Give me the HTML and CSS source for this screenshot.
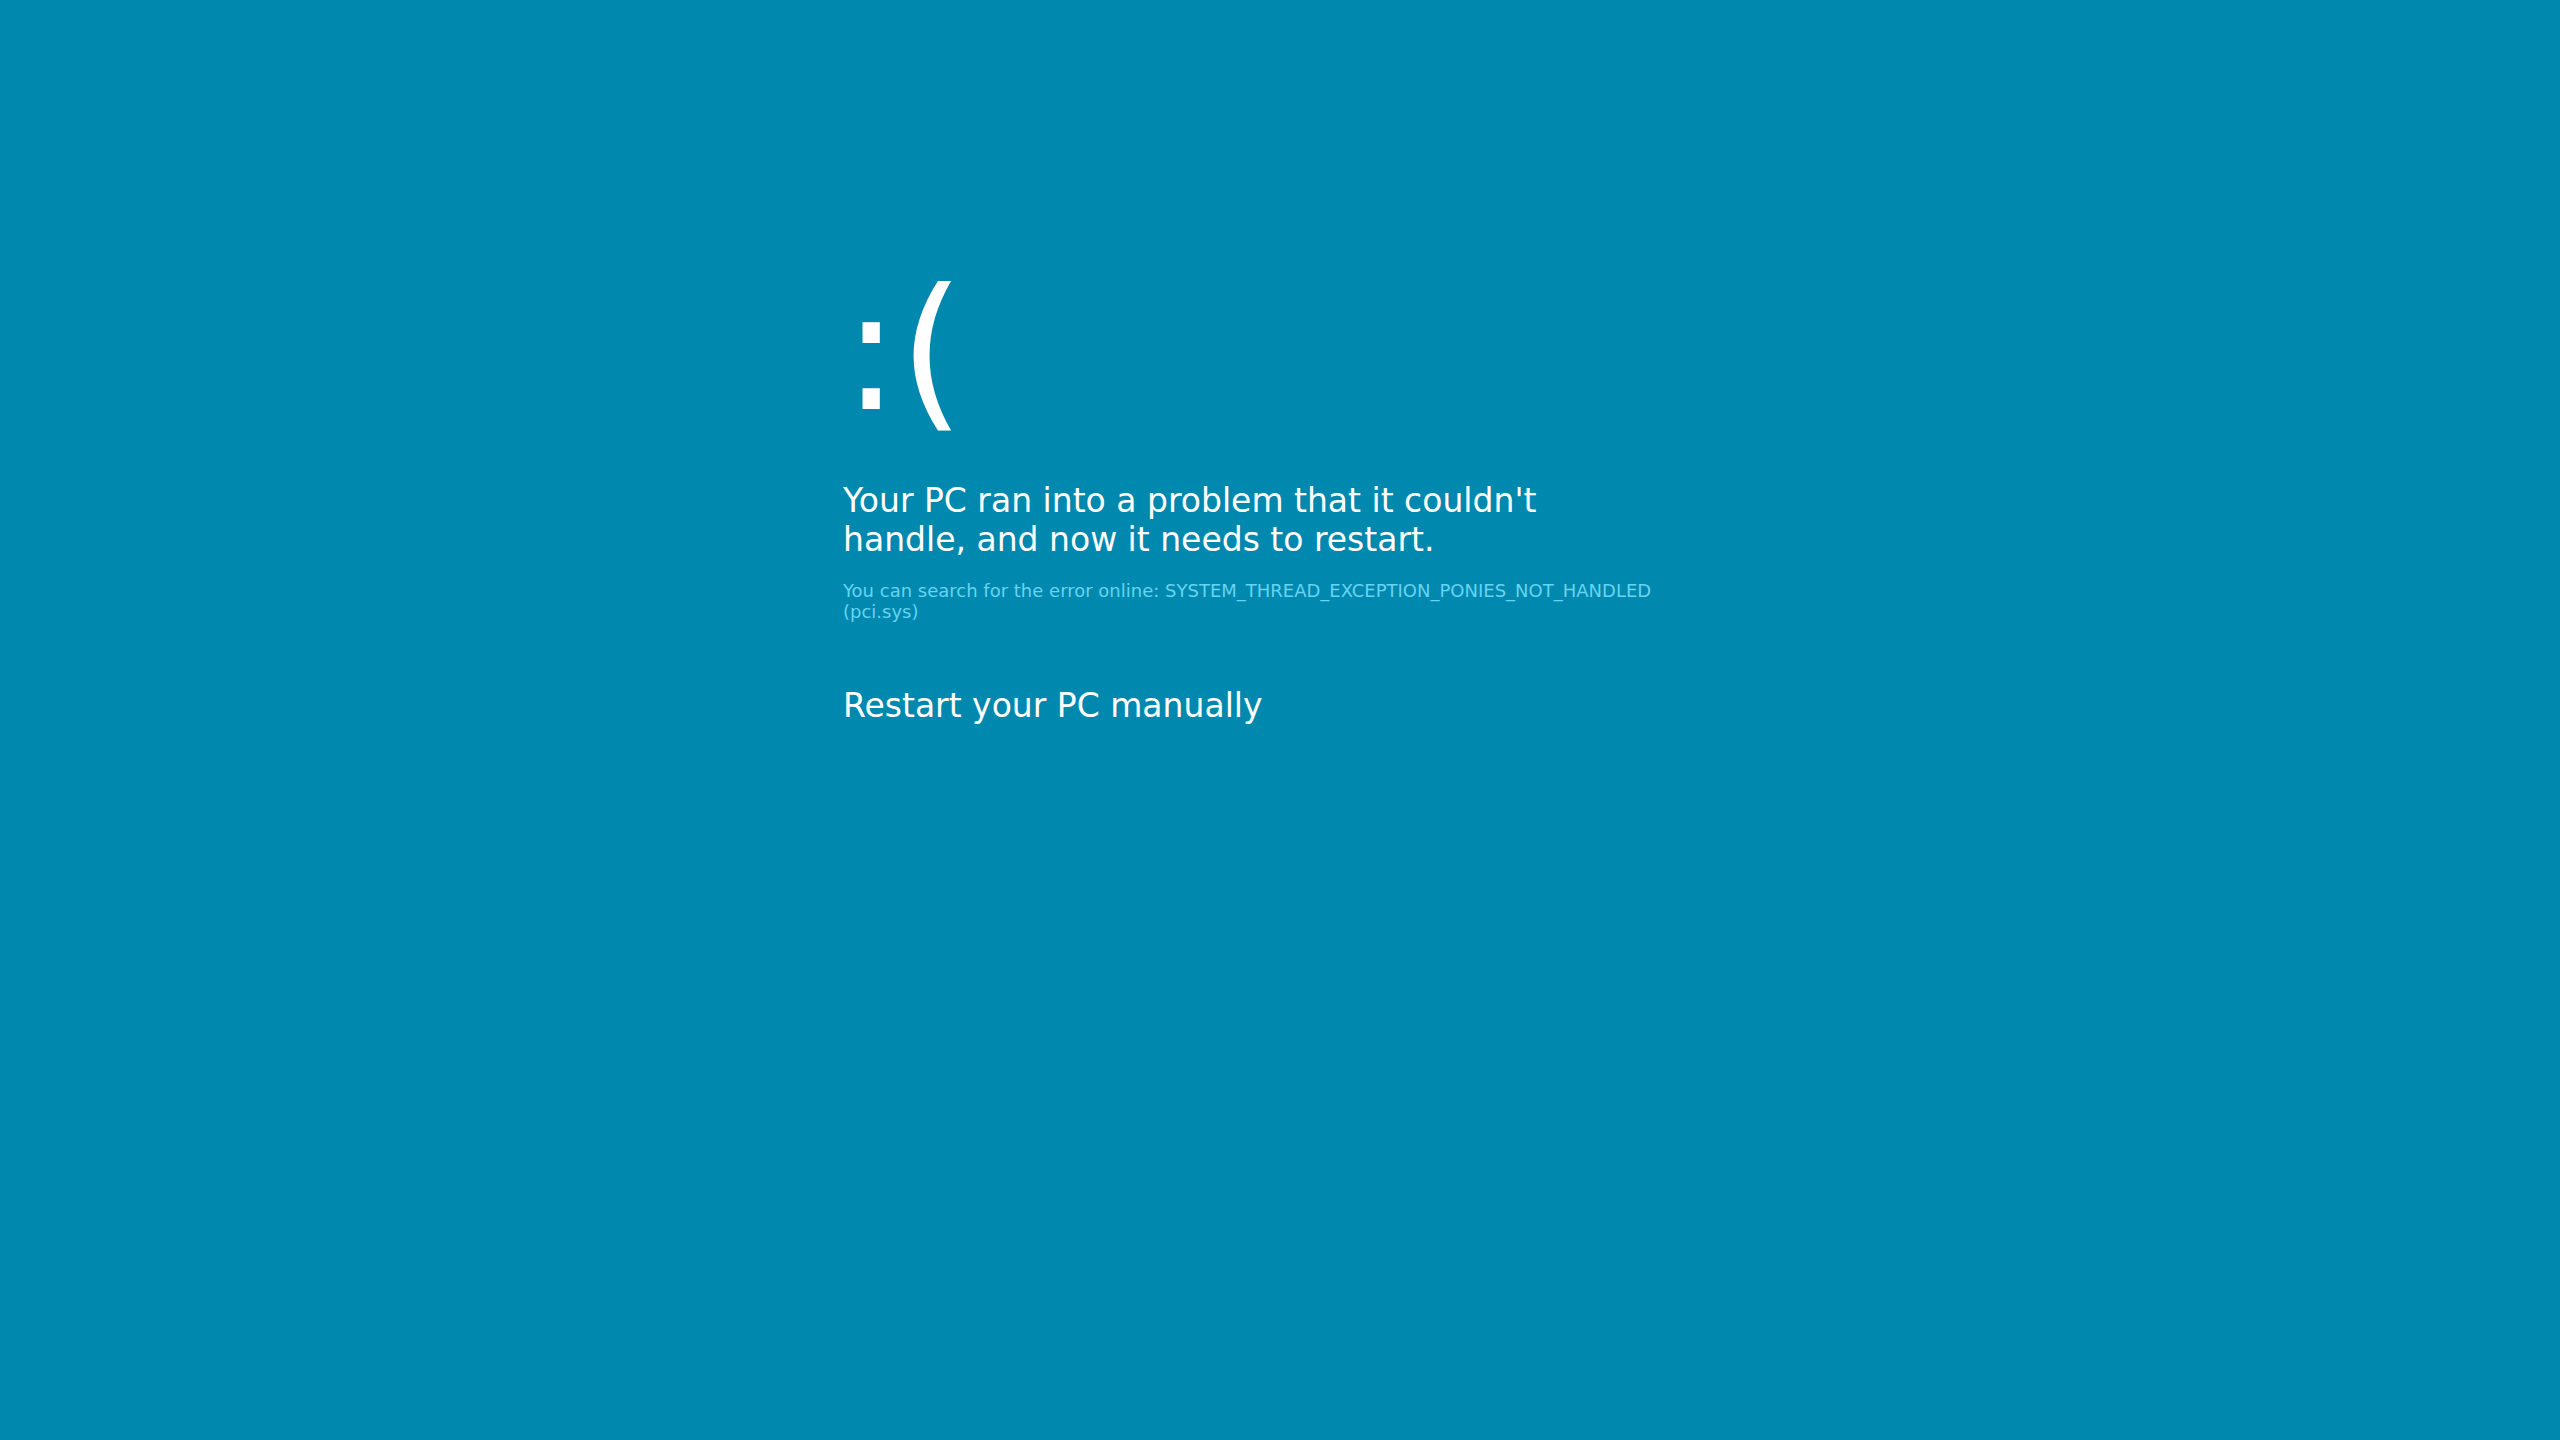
FILE: index.html
```html
<!DOCTYPE html>
<html lang="en">
<head>
<meta charset="utf-8">
<title>Your PC ran into a problem</title>
<link rel="stylesheet" href="styles.css">
</head>
<body>
<main class="screen">
  <div class="face">:(</div>
  <h1 class="headline">Your PC ran into a problem that it couldn't handle, and now it needs to restart.</h1>
  <p class="details">You can search for the error online: SYSTEM_THREAD_EXCEPTION_PONIES_NOT_HANDLED (pci.sys)</p>
  <p class="action">Restart your PC manually</p>
</main>
</body>
</html>
```

FILE: styles.css
```css
html, body {
  margin: 0;
  padding: 0;
  height: 100%;
}

body {
  background: #0088ae;
  color: #ffffff;
  font-family: "DejaVu Sans", sans-serif;
}

.screen {
  box-sizing: border-box;
  width: 824px;
  margin-left: 843px;
  padding-top: 254px;
  display: flex;
  flex-direction: column;
}

.face {
  font-size: 167px;
  line-height: normal;
  margin: 0;
}

.headline {
  font-size: 33px;
  font-weight: normal;
  line-height: normal;
  margin: 33px 0 0 0;
}

.details {
  font-size: 18px;
  line-height: normal;
  color: #66d4f2;
  margin: 21px 0 0 0;
}

.action {
  font-size: 33px;
  line-height: normal;
  margin: 64px 0 0 0;
}
```
